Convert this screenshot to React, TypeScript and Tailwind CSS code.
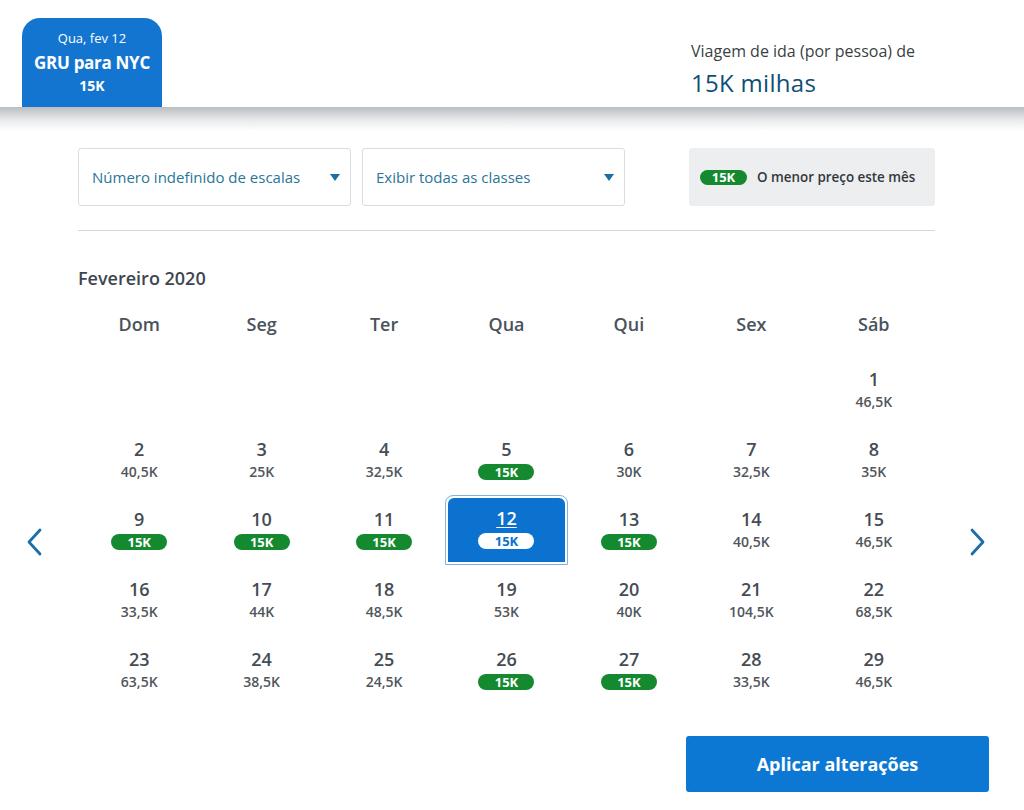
import React from 'react'

const font = { fontFamily: '"Open Sans", "Noto Sans", sans-serif' }

type Day = { d: number; p: string; low?: boolean } | null

const weeks: Day[][] = [
  [null, null, null, null, null, null, { d: 1, p: '46,5K' }],
  [
    { d: 2, p: '40,5K' },
    { d: 3, p: '25K' },
    { d: 4, p: '32,5K' },
    { d: 5, p: '15K', low: true },
    { d: 6, p: '30K' },
    { d: 7, p: '32,5K' },
    { d: 8, p: '35K' },
  ],
  [
    { d: 9, p: '15K', low: true },
    { d: 10, p: '15K', low: true },
    { d: 11, p: '15K', low: true },
    { d: 12, p: '15K', low: true },
    { d: 13, p: '15K', low: true },
    { d: 14, p: '40,5K' },
    { d: 15, p: '46,5K' },
  ],
  [
    { d: 16, p: '33,5K' },
    { d: 17, p: '44K' },
    { d: 18, p: '48,5K' },
    { d: 19, p: '53K' },
    { d: 20, p: '40K' },
    { d: 21, p: '104,5K' },
    { d: 22, p: '68,5K' },
  ],
  [
    { d: 23, p: '63,5K' },
    { d: 24, p: '38,5K' },
    { d: 25, p: '24,5K' },
    { d: 26, p: '15K', low: true },
    { d: 27, p: '15K', low: true },
    { d: 28, p: '33,5K' },
    { d: 29, p: '46,5K' },
  ],
]

const weekdays = ['Dom', 'Seg', 'Ter', 'Qua', 'Qui', 'Sex', 'Sáb']

function Caret() {
  return (
    <svg width="10" height="7" viewBox="0 0 10 7">
      <path d="M0 0 L10 0 L5 7 Z" fill="#1b6fa3" />
    </svg>
  )
}

function Select({ label, width }: { label: string; width: string }) {
  return (
    <div className={`${width} h-[58px] flex items-center justify-between pl-[13px] pr-[10px] border border-[#d9dde0] rounded-[3px] bg-white`}>
      <span className="text-[15px] text-[#2a7697]">{label}</span>
      <Caret />
    </div>
  )
}

function Cell({ day, selected }: { day: Day; selected: boolean }) {
  if (!day) return <div className="h-[70px]" />
  if (selected) {
    return (
      <div className="h-[70px] flex justify-center">
        <div className="w-[123px] h-[70px] rounded-t-[8px] border border-[#7db4df] p-[2px]">
          <div className="w-full h-full rounded-t-[6px] bg-[#0b72cf] flex flex-col items-center pt-[9px]">
            <span className="text-[18px] leading-[22px] font-semibold text-white underline underline-offset-2">{day.d}</span>
            <span className="mt-[4px] w-[56px] h-[16px] rounded-full bg-white text-[#0b72cf] text-[13px] leading-[16px] font-bold text-center">
              {day.p}
            </span>
          </div>
        </div>
      </div>
    )
  }
  return (
    <div className="h-[70px] flex flex-col items-center pt-[13px]">
      <span className="text-[18px] leading-[22px] font-semibold text-[#454c54]">{day.d}</span>
      {day.low ? (
        <span className="mt-[4px] w-[56px] h-[16px] rounded-full bg-[#14892f] text-white text-[13px] leading-[16px] font-bold text-center">
          {day.p}
        </span>
      ) : (
        <span className="mt-[3px] text-[14px] leading-[18px] font-semibold text-[#50565c]">{day.p}</span>
      )}
    </div>
  )
}

function Chevron({ dir }: { dir: 'left' | 'right' }) {
  return (
    <svg width="16" height="28" viewBox="0 0 16 28">
      <path
        d={dir === 'left' ? 'M14 2 L3 14 L14 26' : 'M2 2 L13 14 L2 26'}
        fill="none"
        stroke="#1d6ea8"
        strokeWidth="2.8"
        strokeLinecap="round"
        strokeLinejoin="round"
      />
    </svg>
  )
}

export default function App() {
  return (
    <div className="w-[1024px] h-[810px] bg-white overflow-hidden" style={font}>
      {/* Header */}
      <div className="h-[107px] flex items-end justify-between">
        <div className="ml-[22px] w-[140px] h-[89px] rounded-t-[18px] bg-[#1475d0] text-white flex flex-col items-center pt-[12px]">
          <span className="text-[13px] leading-[17px]">Qua, fev 12</span>
          <span className="text-[17px] leading-[23px] font-bold mt-[4px] tracking-[-0.3px]">GRU para NYC</span>
          <span className="text-[14px] leading-[17px] font-bold mt-[3px]">15K</span>
        </div>
        <div className="w-[333px] self-start pt-[40px]">
          <div className="text-[16px] leading-[22px] text-[#3a3f44]">Viagem de ida (por pessoa) de</div>
          <div className="text-[24px] leading-[32px] text-[#0f4f75] mt-[5px] tracking-[0.3px]">15K milhas</div>
        </div>
      </div>
      <div className="h-[24px] bg-gradient-to-b from-[#b9bdc1] via-[#e6e8ea] to-white" />

      {/* Filters */}
      <div className="ml-[78px] w-[857px] mt-[17px] flex">
        <Select label="Número indefinido de escalas" width="w-[273px]" />
        <div className="ml-[11px]">
          <Select label="Exibir todas as classes" width="w-[263px]" />
        </div>
        <div className="ml-auto w-[246px] h-[58px] rounded-[3px] bg-[#eceeef] flex items-center pl-[11px]">
          <span className="w-[47px] h-[15px] rounded-full bg-[#14892f] text-white text-[13px] leading-[15px] font-bold text-center">
            15K
          </span>
          <span className="ml-[10px] text-[13.4px] font-semibold text-[#33383d]">O menor preço este mês</span>
        </div>
      </div>
      <div className="ml-[78px] w-[857px] mt-[24px] border-t border-[#d6d9dc]" />

      {/* Calendar */}
      <div className="flex">
        <div className="w-[78px] flex items-center pl-[26px] pt-[148px]">
          <Chevron dir="left" />
        </div>
        <div className="w-[857px]">
          <div className="mt-[35px] text-[18px] leading-[24px] font-semibold text-[#3d4650]">Fevereiro 2020</div>
          <div className="grid grid-cols-7 mt-[22px]">
            {weekdays.map((w) => (
              <div key={w} className="text-center text-[18px] leading-[24px] font-semibold text-[#4a525b]">
                {w}
              </div>
            ))}
          </div>
          <div className="mt-[19px] grid grid-cols-7">
            {weeks.map((week, wi) =>
              week.map((day, di) => <Cell key={`${wi}-${di}`} day={day} selected={day?.d === 12} />)
            )}
          </div>
        </div>
        <div className="flex-1 flex items-center pl-[35px] pt-[148px]">
          <Chevron dir="right" />
        </div>
      </div>

      {/* Apply */}
      <div className="flex justify-end pr-[35px] mt-[31px]">
        <button className="w-[303px] h-[56px] rounded-[3px] bg-[#0c78d4] text-white text-[18px] font-bold">
          Aplicar alterações
        </button>
      </div>
    </div>
  )
}
